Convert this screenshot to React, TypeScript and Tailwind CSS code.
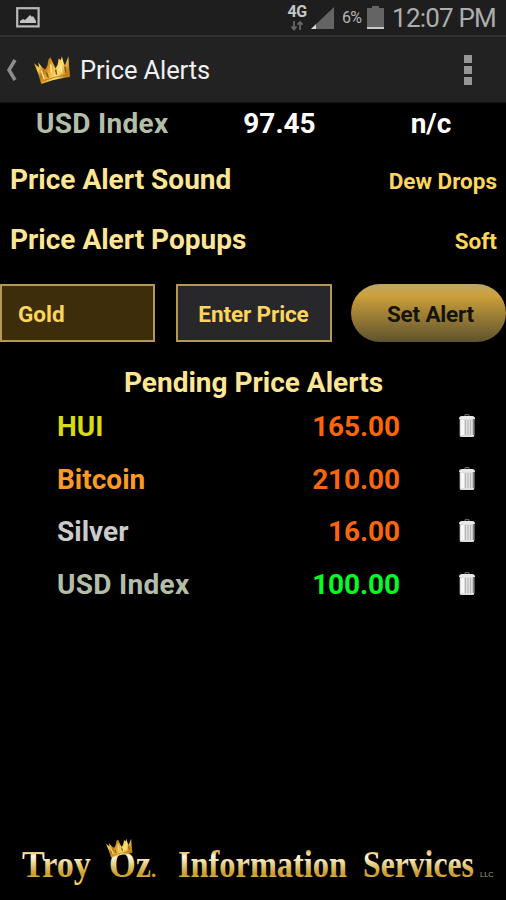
import React from "react";

interface PriceAlert {
  name: string;
  price: string;
  nameClass: string;
  priceClass: string;
}

const alerts: PriceAlert[] = [
  { name: "HUI", price: "165.00", nameClass: "text-[#d6dc0e]", priceClass: "text-[#f9660c]" },
  { name: "Bitcoin", price: "210.00", nameClass: "text-[#fd9a22]", priceClass: "text-[#f9660c]" },
  { name: "Silver", price: "16.00", nameClass: "text-[#cbcbcb]", priceClass: "text-[#f9660c]" },
  { name: "USD Index", price: "100.00", nameClass: "text-[#b3bea9] tracking-[0.3px]", priceClass: "text-[#08fb25]" },
];

const settings = [
  { label: "Price Alert Sound", value: "Dew Drops" },
  { label: "Price Alert Popups", value: "Soft" },
];

const Crown = ({ id }: { id: string }) => (
  <>
    <defs>
      <linearGradient id={id} x1="0" y1="0" x2="1" y2="0.35">
        <stop offset="0" stopColor="#c98a1c" />
        <stop offset="0.25" stopColor="#f9cf52" />
        <stop offset="0.4" stopColor="#b9771a" />
        <stop offset="0.55" stopColor="#e9ac30" />
        <stop offset="0.78" stopColor="#ffe07a" />
        <stop offset="1" stopColor="#c98512" />
      </linearGradient>
    </defs>
    <path
      d="M8 28 L5 18 L1 8 L6 12 L5 7 L9 12 L12 14 L14 10 L15 4 L17 2 L20 9 L22 13 L24 9 L25 3 L27 5 L28 1 L30 8 L31 10 L33 5 L34.5 1 L35 9 L36 21 Q22 23 8 28Z"
      fill={`url(#${id})`}
    />
    <path d="M13 17 L15 22 M22 14 L23 19 M31 11 L32 17" stroke="#8a520c" strokeWidth="1.4" fill="none" />
    <path d="M8 15 L11 23 M17 9 L18 17 M27 10 L28 17" stroke="#ffec96" strokeWidth="1.3" fill="none" />
    <path d="M10 25 Q21 21 34 19" stroke="#a96c14" strokeWidth="0.8" fill="none" />
  </>
);

const StatusBar = () => (
  <div className="flex h-[35px] shrink-0 items-center justify-between bg-[#1e1e1e] pl-4 pr-2.5">
    <svg width="24" height="21" viewBox="0 0 24 21">
      <rect x="1.2" y="1.2" width="21.4" height="18.2" fill="none" stroke="#b9b9b9" strokeWidth="2.2" />
      <path d="M4 16v-2l3-2 2 1 5-5 2 2 1-1 3 5v2z" fill="#c4c4c4" />
    </svg>
    <div className="flex h-full items-center text-[#adadad]">
      <div className="mr-1 flex w-5 flex-col items-center">
        <span className="text-base leading-[14px] font-bold tracking-[-0.5px] text-[#c6c6c6]">4G</span>
        <svg className="mt-0.5" width="14" height="10" viewBox="0 0 14 10">
          <path d="M4 0v8M1.5 5.5L4 8.5l2.5-3M10 9V1M7.5 3.7L10 1l2.5 2.7" stroke="#656565" strokeWidth="1.8" fill="none" />
        </svg>
      </div>
      <svg width="24" height="24" viewBox="0 0 24 24">
        <path d="M0 23L23 1v22z" fill="#636363" />
        <path d="M0 23l5-4.8V23z" fill="#dedede" />
      </svg>
      <span className="ml-[7px] w-[23px] text-base tracking-[-0.8px] text-[#b4b4b4]">6%</span>
      <svg className="ml-[2px]" width="17" height="24" viewBox="0 0 17 24">
        <path d="M5 0h7v2h5v21H0V2h5z" fill="#646464" />
        <path d="M0 21h17v2H0z" fill="#c9c9c9" />
      </svg>
      <span className="ml-2 text-[26px] leading-none tracking-[-0.8px] whitespace-nowrap">12:07 PM</span>
    </div>
  </div>
);

const Header = () => (
  <header className="flex h-[67px] shrink-0 items-center border-t-2 border-[#303030] bg-[#222222] pl-[6px]">
    <svg width="11" height="22" viewBox="0 0 11 22">
      <path d="M9 1L3 11 9 21" stroke="#8d8d8d" strokeWidth="3.5" fill="none" />
    </svg>
    <svg className="ml-4 shrink-0" width="37" height="30" viewBox="0 0 36 29">
      <Crown id="crown-header" />
    </svg>
    <h1 className="mt-[2px] ml-[10px] text-[25.5px] leading-none font-normal tracking-[-0.1px] text-[#f0f0f0]">Price Alerts</h1>
    <div className="mr-[34px] ml-auto flex flex-col gap-[3px]">
      <span className="size-2 bg-[#969696]" />
      <span className="size-2 bg-[#969696]" />
      <span className="size-2 bg-[#969696]" />
    </div>
  </header>
);

const TrashIcon = () => (
  <svg width="16" height="24" viewBox="0 0 16 24">
    <path d="M6 2V.7h4V2" stroke="#777" fill="none" />
    <path d="M.7 4h14.6v17.5q0 1.5-2 1.5H2.7q-2 0-2-1.5z" fill="#dedede" />
    <path d="M0 5q0-3 3-3h10q3 0 3 3z" fill="#e8e8e8" />
    <path d="M3.5 6v15" stroke="#f8f8f8" strokeWidth="3" />
    <path d="M6.5 6v15M9 6v15M11.5 6v15" stroke="#b0b0b0" strokeWidth="0.9" />
    <path d="M14.5 5v16" stroke="#808080" strokeWidth="1.5" />
  </svg>
);

const Footer = () => (
  <footer className="mt-auto h-[70px] w-full">
    <svg width="506" height="70" viewBox="0 0 506 70">
      <defs>
        <linearGradient id="gold-text" gradientUnits="userSpaceOnUse" x1="0" y1="-27" x2="0" y2="5">
          <stop offset="0" stopColor="#d9a63a" />
          <stop offset="0.2" stopColor="#fffbe0" />
          <stop offset="0.5" stopColor="#e0c676" />
          <stop offset="0.75" stopColor="#c99a2a" />
          <stop offset="1" stopColor="#f3cd62" />
        </linearGradient>
      </defs>
      <g fill="url(#gold-text)" fontFamily="'Liberation Serif', serif" fontWeight="bold" fontSize="37">
        <text transform="translate(22 47) scale(0.922 1)">Troy</text>
        <text transform="translate(109 47) scale(0.93 1)">
          Oz<tspan fontSize="22">.</tspan>
        </text>
        <text transform="translate(178 47) scale(0.875 1)">Information</text>
        <text transform="translate(363 47) scale(0.857 1)">Services</text>
      </g>
      <text x="480" y="47" fontFamily="'Liberation Sans', sans-serif" fontSize="7.5" fill="#a99c78">LLC</text>
      <g transform="translate(105 8) scale(0.76 0.7)">
        <Crown id="crown-footer" />
      </g>
    </svg>
  </footer>
);

const App: React.FC = () => {
  return (
    <div className="flex h-[900px] w-[506px] flex-col overflow-hidden bg-black font-[Roboto,sans-serif]">
      <StatusBar />
      <Header />

      <div className="flex h-[43px] shrink-0 items-center bg-linear-to-b from-[#181818] to-black to-8% text-[28px] font-bold text-white">
        <span className="w-[206px] pl-9 tracking-[0.3px] text-[#b3bea9]">USD Index</span>
        <span className="w-[147px] text-center">97.45</span>
        <span className="flex-1 pl-[3px] text-center">n/c</span>
      </div>

      <div className="mt-[5px] shrink-0 font-bold">
        {settings.map((item) => (
          <div key={item.label} className="flex h-[60px] items-baseline justify-between pr-[9px] pl-[10px]">
            <span className="text-[28px] leading-[60px] text-[#ffe695]">{item.label}</span>
            <span className="text-[22.5px] text-[#ffd55c]">{item.value}</span>
          </div>
        ))}
      </div>

      <div className="mt-[14px] flex h-[58px] shrink-0 justify-between text-[22.5px] font-bold">
        <button className="w-[155px] border-2 border-[#b4985a] bg-[#3e2d0a] pt-1 pl-4 text-left text-[#ffd55c]">
          Gold
        </button>
        <button className="ml-[1px] w-[156px] border-2 border-[#b4985a] bg-[#28282a] pt-1 tracking-[-0.1px] text-[#ffd55c]">
          Enter Price
        </button>
        <button className="w-[155px] rounded-full bg-linear-to-b from-[#bba765] via-[#cda03a] via-20% to-[#5f532c] pt-1 pl-1 tracking-[-0.2px] text-[#15130d]">
          Set Alert
        </button>
      </div>

      <h2 className="mt-[22px] h-[37px] shrink-0 pl-px text-center text-[28px] leading-[37px] font-bold text-[#ffe695]">
        Pending Price Alerts
      </h2>

      <ul className="shrink-0 text-[28px] font-bold">
        {alerts.map((alert) => (
          <li key={alert.name} className="flex h-[52.5px] items-center pr-[31px] pl-[57px]">
            <span className={alert.nameClass}>{alert.name}</span>
            <span className={`ml-auto tracking-[-0.1px] ${alert.priceClass}`}>{alert.price}</span>
            <button className="mb-[2px] ml-[59px]">
              <TrashIcon />
            </button>
          </li>
        ))}
      </ul>

      <Footer />
    </div>
  );
};

export default App;
